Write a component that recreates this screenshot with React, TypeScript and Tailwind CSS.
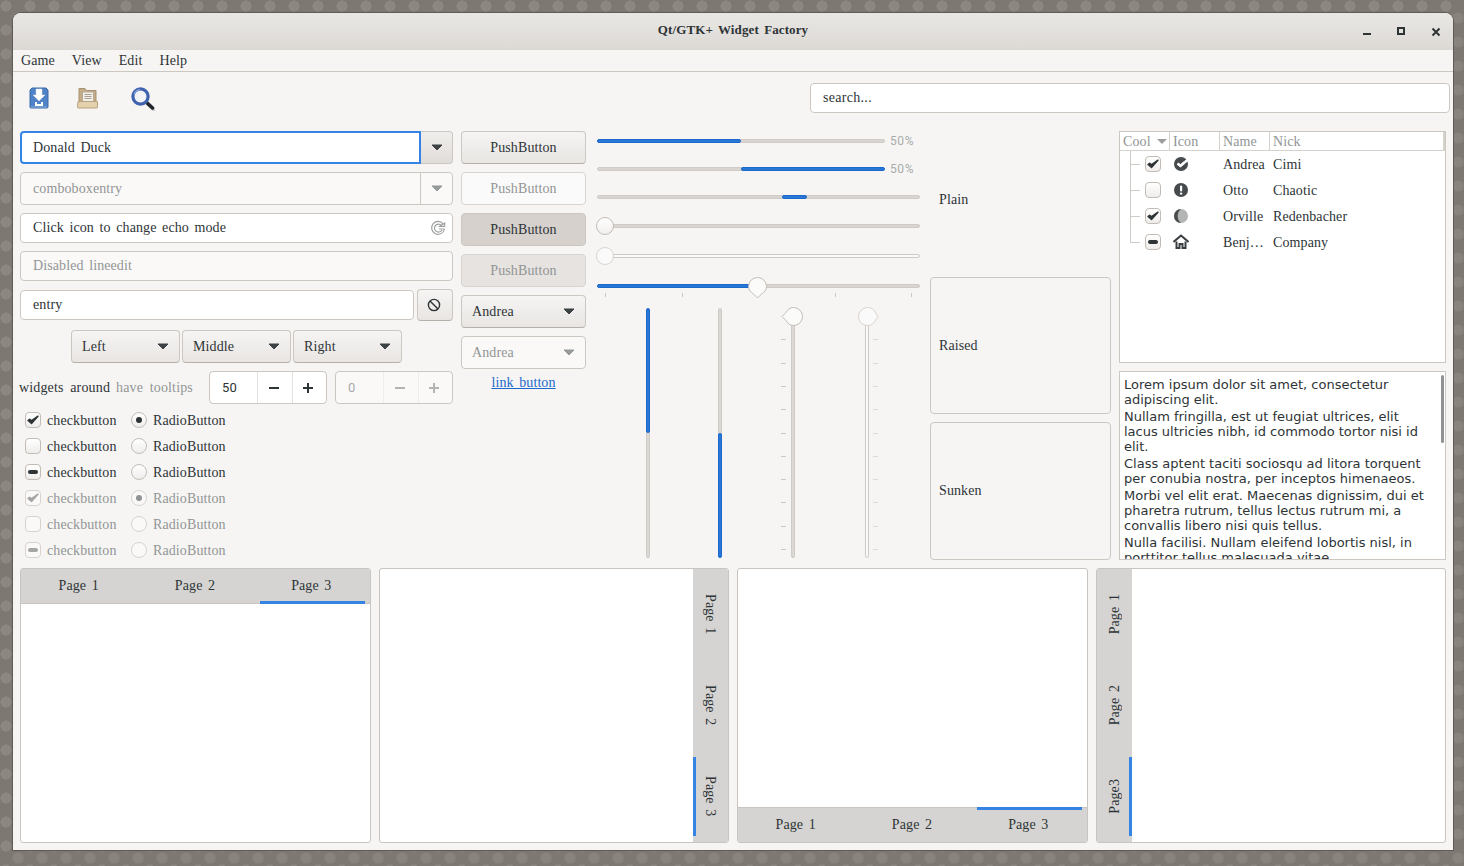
import React from "react";

const border = "border border-[#cdc7c2]";
const btn = "border border-[#cdc7c2] border-b-[#b6b0aa] rounded-[4px] bg-gradient-to-b from-[#f6f5f4] to-[#e8e5e2]";

function Caret({ dim }: { dim?: boolean }) {
  return (
    <svg width="12" height="7" viewBox="0 0 12 7" className="shrink-0">
      <path d="M1 1h10L6 6z" fill={dim ? "#979a9a" : "#3d4245"} stroke={dim ? "#979a9a" : "#3d4245"} strokeLinejoin="round" />
    </svg>
  );
}

function CheckBox({ state, dim }: { state: "on" | "off" | "mixed"; dim?: boolean }) {
  const c = dim ? "#a4a6a6" : "#2e3436";
  return (
    <span className={`w-[16px] h-[16px] shrink-0 rounded-[4px] flex items-center justify-center border border-[#c3bcb6] ${dim ? "bg-[#faf9f8] border-[#d8d3cf]" : "bg-gradient-to-b from-[#ffffff] to-[#efedeb]"}`}>
      {state === "on" && (
        <svg width="12" height="12" viewBox="0 0 12 12">
          <path d="M1 6.5l3.5 3L11 2.2 4.6 6.6 2.6 5.2z" fill={c} stroke={c} strokeWidth="1.4" strokeLinejoin="round" />
        </svg>
      )}
      {state === "mixed" && <span className="w-[10px] h-[4px] rounded-[2px]" style={{ background: c }} />}
    </span>
  );
}

function Radio({ on, dim }: { on?: boolean; dim?: boolean }) {
  return (
    <span className={`w-[16px] h-[16px] shrink-0 rounded-full flex items-center justify-center border ${dim ? "bg-[#faf9f8] border-[#d8d3cf]" : "bg-gradient-to-b from-[#ffffff] to-[#efedeb] border-[#c3bcb6]"}`}>
      {on && <span className={`w-[6px] h-[6px] rounded-full ${dim ? "bg-[#8f9292]" : "bg-[#2e3436]"}`} />}
    </span>
  );
}

function CheckRow({ check, radio, dim }: { check: "on" | "off" | "mixed"; radio?: boolean; dim?: boolean }) {
  return (
    <div className={`h-[26px] flex items-center pl-[5px] ${dim ? "text-[#929595]" : ""}`}>
      <CheckBox state={check} dim={dim} />
      <span className="ml-[6px] w-[84px]">checkbutton</span>
      <Radio on={radio} dim={dim} />
      <span className="ml-[6px]">RadioButton</span>
    </div>
  );
}

function Dropdown({ label }: { label: string }) {
  return (
    <div className={`${btn} w-[109px] h-[33px] flex items-center justify-between pl-[10px] pr-[10px]`}>
      <span>{label}</span>
      <Caret />
    </div>
  );
}

function Spin({ value, dim }: { value: string; dim?: boolean }) {
  const ink = dim ? "#b3b5b5" : "#2e3436";
  return (
    <div className={`w-[118px] h-[33px] flex rounded-[4px] border border-[#cdc7c2] ${dim ? "bg-[#faf9f8]" : "bg-white"}`}>
      <div className={`w-[47px] flex items-center pl-[12px] font-['Roboto',sans-serif] text-[13px] [word-spacing:0] ${dim ? "text-[#a8aaaa]" : ""}`}>{value}</div>
      {[0, 1].map((i) => (
        <div key={i} className={`flex-1 flex items-center justify-center pr-[2px] border-l ${dim ? "border-[#efedeb]" : "border-[#e4e1de]"}`}>
          <svg width="12" height="12" viewBox="0 0 12 12">
            <path d={i === 0 ? "M1 6h10" : "M1 6h10M6 1v10"} stroke={ink} strokeWidth="2" />
          </svg>
        </div>
      ))}
    </div>
  );
}

function Progress({ from, to, width, label }: { from: number; to: number; width: number; label?: boolean }) {
  return (
    <div className="h-[20px] flex items-center">
      <div className="relative h-[4px] rounded-[2px] bg-[#d9d5d1] border border-[#d0cbc6]" style={{ width }}>
        <div className="absolute -top-px -bottom-px rounded-[2px] bg-[#2a76d6] border border-[#1b6acb]" style={{ left: from - 1, width: to - from }} />
      </div>
      {label && <span className="ml-[5px] font-['Roboto',sans-serif] text-[12px] text-[#a9abab] tracking-[0.6px]">50%</span>}
    </div>
  );
}

function Thumb({ dim }: { dim?: boolean }) {
  return <span className={`absolute w-[18px] h-[18px] rounded-full border ${dim ? "bg-[#fafafa] border-[#d8d3cf]" : "bg-gradient-to-b from-[#ffffff] to-[#f1efed] border-[#c3bcb6]"}`} />;
}

function PointThumb({ d, dim, cls, w, h }: { d: string; dim?: boolean; cls: string; w: number; h: number }) {
  return (
    <svg width={w} height={h} viewBox={`0 0 ${w} ${h}`} className={`absolute ${cls}`}>
      <path d={d} fill={dim ? "#fafafa" : "#fbfbfa"} stroke={dim ? "#d8d3cf" : "#c3bcb6"} />
    </svg>
  );
}

function VBar({ fill, dim, ticks, thumb }: { fill?: "top" | "bottom"; dim?: boolean; ticks?: "l" | "r"; thumb?: "l" | "r" }) {
  const ys = [31, 55, 78, 101, 125, 148, 171, 194, 218, 241];
  return (
    <div className={`relative w-[4px] h-[250px] rounded-[2px] border border-[#cfcac5] ${dim ? "bg-[#fafafa]" : "bg-[#dcd8d4]"}`}>
      {fill === "top" && <div className="absolute -left-px -right-px -top-px h-[125px] rounded-[2px] bg-[#2a76d6] border border-[#1b6acb]" />}
      {fill === "bottom" && <div className="absolute -left-px -right-px -bottom-px h-[125px] rounded-[2px] bg-[#2a76d6] border border-[#1b6acb]" />}
      {ticks && ys.map((y) => (
        <span key={y} className={`absolute w-[5px] h-px ${ticks === "l" ? "left-[-11px] bg-[#cdc7c2]" : "left-[7px] bg-[#dedad6]"}`} style={{ top: y - 1 }} />
      ))}
      {thumb === "l" && <PointThumb w={22} h={20} cls="left-[-11px] top-[-2px]" d="M1 9.5L5 5.5C6.7 2.5 9 .5 12.5.5a9 9 0 0 1 0 18c-3.5 0-5.8-2-7.5-5z" />}
      {thumb === "r" && <PointThumb w={22} h={20} dim cls="left-[-9px] top-[-2px]" d="M21 9.5L19 6.5C17.3 2.5 14 .5 10.5.5a9 9 0 0 0 0 18c3.5 0 6.8-2 8.5-6z" />}
    </div>
  );
}

function HTabs({ bottom }: { bottom?: boolean }) {
  return (
    <div className={`w-[351px] h-[275px] flex bg-white border border-[#c9c4bf] rounded-[3px] overflow-hidden ${bottom ? "flex-col-reverse" : "flex-col"}`}>
      <div className={`h-[35px] shrink-0 flex bg-[#d5d4d2] border-[#c9c4bf] ${bottom ? "border-t" : "border-b"}`}>
        {["Page 1", "Page 2", "Page 3"].map((t, i) => (
          <div key={t} className="relative flex-1 flex items-center justify-center pb-[2px] pr-[1px]">
            {t}
            {i === 2 && <span className={`absolute left-[6px] right-[5px] h-[3px] bg-[#3584e4] ${bottom ? "top-[-1px]" : "bottom-[-1px]"}`} />}
          </div>
        ))}
      </div>
      <div className="flex-1" />
    </div>
  );
}

function VTabs({ left, labels }: { left?: boolean; labels: string[] }) {
  return (
    <div className={`w-[350px] h-[275px] flex bg-white border border-[#c9c4bf] rounded-[3px] overflow-hidden ${left ? "flex-row" : "flex-row-reverse"}`}>
      <div className="w-[35px] shrink-0 flex flex-col bg-[#d5d4d2]">
        {labels.map((t, i) => (
          <div key={i} className="relative flex-1 flex items-center justify-center">
            <span className={`[writing-mode:vertical-rl] ${left ? "rotate-180" : ""}`}>{t}</span>
            {i === 2 && <span className={`absolute top-[6px] bottom-[6px] w-[3px] bg-[#3584e4] ${left ? "right-0" : "left-0"}`} />}
          </div>
        ))}
      </div>
      <div className="flex-1" />
    </div>
  );
}

function SaveIcon() {
  return (
    <svg width="20" height="22" viewBox="0 0 20 22">
      <path d="M3 1h14l2 2v17a1 1 0 0 1-1 1H2a1 1 0 0 1-1-1V3z" fill="#4f82c6" stroke="#3a68a8" />
      <path d="M2 20h16" stroke="#8fb2df" />
      <path d="M7 2h6v6h3l-6 6-6-6h3z" fill="#fff" stroke="#d4deea" strokeWidth=".5" />
      <path d="M6 15v4h8v-4h-2v2H8v-2z" fill="#fff" />
    </svg>
  );
}
function FolderIcon() {
  return (
    <svg width="21" height="22" viewBox="0 0 21 22">
      <path d="M2 4V1.5h6l1.5 2H19v15H2z" fill="#c4ac88" stroke="#a8916e" />
      <rect x="5.5" y="5" width="11" height="9.5" fill="#f2efe9" stroke="#b7ab97" />
      <path d="M7.5 7.5h7M7.5 9.5h7M7.5 11.5h7" stroke="#a9a294" />
      <path d="M1 14.5h19.5V20a1 1 0 0 1-1 1H1.5a1 1 0 0 1-1-1z" fill="#e3d0ad" stroke="#b8a27d" />
    </svg>
  );
}
function SearchIcon() {
  return (
    <svg width="24" height="24" viewBox="0 0 24 24">
      <path d="M15 15l7.5 7" stroke="#999" strokeWidth="4" strokeLinecap="round" opacity=".5" />
      <path d="M14.5 14.5l7 6.5" stroke="#20242a" strokeWidth="3.4" strokeLinecap="round" />
      <circle cx="9.5" cy="9.5" r="7.6" fill="#f2f4f7" stroke="#3f63ae" strokeWidth="3.2" />
      <path d="M3 7.5A7 7 0 0 1 9 2.6" fill="none" stroke="#8ba8dc" strokeWidth="1.2" />
    </svg>
  );
}

function TreeIcon({ kind }: { kind: number }) {
  if (kind === 0)
    return (
      <svg width="16" height="16" viewBox="0 0 16 16">
        <circle cx="8" cy="8" r="7" fill="#474a4c" />
        <path d="M4.5 7.5l3 2.5L15 3.5" fill="none" stroke="#fff" strokeWidth="2.4" />
        <path d="M4.8 7.6l2.7 2.2 3.8-3.6" fill="none" stroke="#fff" strokeWidth="2" />
      </svg>
    );
  if (kind === 1)
    return (
      <svg width="16" height="16" viewBox="0 0 16 16">
        <circle cx="8" cy="8" r="7" fill="#474a4c" />
        <rect x="7" y="3.5" width="2.2" height="6" rx="1" fill="#fff" />
        <circle cx="8.1" cy="11.6" r="1.2" fill="#fff" />
      </svg>
    );
  if (kind === 2)
    return (
      <svg width="16" height="16" viewBox="0 0 16 16">
        <circle cx="8" cy="8" r="7" fill="#b3b4b4" />
        <path d="M8 1a7 7 0 0 0-7 7 7 7 0 0 0 7 7 9 9 0 0 1 0-14z" fill="#474a4c" />
      </svg>
    );
  return (
    <svg width="16" height="16" viewBox="0 0 16 16">
      <path d="M.5 8L8 1.5 15.5 8" fill="none" stroke="#3a3e40" strokeWidth="2" />
      <path d="M3.5 7.5V14h3v-4h3v4h3V7.5" fill="none" stroke="#3a3e40" strokeWidth="2" />
    </svg>
  );
}

const tree: [("on" | "off" | "mixed"), string, string][] = [
  ["on", "Andrea", "Cimi"],
  ["off", "Otto", "Chaotic"],
  ["on", "Orville", "Redenbacher"],
  ["mixed", "Benj…", "Company"],
];

export default function App() {
  return (
    <div className="w-[1464px] h-[866px] overflow-hidden pt-[13px] pl-[13px] bg-[#7e7872] bg-[radial-gradient(circle_at_25%_25%,#8c8781_0_5px,transparent_6px),radial-gradient(circle_at_75%_75%,#88837d_0_5px,transparent_6px)] bg-[length:24px_24px] font-['Liberation_Serif',serif] text-[14px] text-[#2e3436] [word-spacing:2px] tracking-[0.1px]">
      <div className="w-[1440px] h-[837px] flex flex-col bg-[#f6f5f4] rounded-t-[8px] overflow-hidden shadow-[0_0_0_1px_#5f5a55]">
        <div className="relative h-[37px] shrink-0 flex items-center justify-center pb-[4px] bg-gradient-to-b from-[#e9e7e4] to-[#dcd9d5] font-bold text-[13px]">
          Qt/GTK+ Widget Factory
          <span className="absolute left-[1350px] top-[20px] w-[8px] h-[2px] bg-[#2e3436]" />
          <span className="absolute left-[1384px] top-[14px] w-[8px] h-[8px] border-2 border-[#2e3436]" />
          <svg width="10" height="10" viewBox="0 0 10 10" className="absolute left-[1418px] top-[14px]">
            <path d="M1.5 1.5l7 7M8.5 1.5l-7 7" stroke="#2e3436" strokeWidth="2" />
          </svg>
        </div>
        <div className="h-[22px] shrink-0 flex items-center gap-[17px] pl-[8px] border-b border-[#cdc7c2]">
          <span>Game</span><span>View</span><span>Edit</span><span>Help</span>
        </div>
        <div className="h-[59px] shrink-0 flex items-start pl-[16px] pr-[3px] pt-[11px]">
          <div className="flex items-start mt-[4px]">
            <SaveIcon />
            <span className="ml-[28px]"><FolderIcon /></span>
            <span className="ml-[33px]"><SearchIcon /></span>
          </div>
          <div className={`ml-auto w-[640px] h-[30px] flex items-center pl-[12px] pb-[2px] bg-white rounded-[4px] tracking-[0.3px] ${border}`}>search...</div>
        </div>

        <div className="flex pl-[7px] h-[429px] shrink-0">
          {/* Left column */}
          <div className="w-[433px] shrink-0 flex flex-col [&>*]:shrink-0">
            <div className="h-[33px] flex">
              <div className="flex-1 flex items-center pl-[11px] bg-white rounded-l-[4px] border-2 border-[#3584e4]">Donald Duck</div>
              <div className="w-[32px] flex items-center justify-center rounded-r-[4px] border border-l-0 border-[#cdc7c2] bg-gradient-to-b from-[#f0eeec] to-[#e0dcd9]"><Caret /></div>
            </div>
            <div className={`mt-[8px] h-[33px] flex rounded-[4px] bg-[#faf9f8] text-[#929595] ${border}`}>
              <div className="flex-1 flex items-center pl-[12px]">comboboxentry</div>
              <div className="w-[32px] flex items-center justify-center border-l border-[#cdc7c2]"><Caret dim /></div>
            </div>
            <div className={`mt-[8px] h-[30px] flex items-center justify-between pl-[12px] pr-[6px] rounded-[4px] bg-white ${border}`}>
              <span className="pb-[2px]">Click icon to change echo mode</span>
              <svg width="16" height="16" viewBox="0 0 16 16" fill="none" stroke="#9a9c9c" strokeWidth="1.1">
                <path d="M13.5 4.2A6.5 6.5 0 1 0 14.5 9" />
                <path d="M12 6.2A4 4 0 1 0 12 10" />
                <path d="M9.5 6.5h5.2V3z" fill="#f3f3f3" />
                <path d="M14.5 9H9" />
              </svg>
            </div>
            <div className={`mt-[8px] h-[30px] flex items-center pl-[12px] pb-[2px] rounded-[4px] bg-[#faf9f8] text-[#929595] ${border}`}>Disabled lineedit</div>
            <div className="mt-[8px] h-[32px] flex items-center">
              <div className={`w-[394px] h-[30px] flex items-center pl-[12px] pb-[2px] rounded-[4px] bg-white ${border}`}>entry</div>
              <div className={`ml-[3px] w-[36px] h-[32px] flex items-center justify-center pr-[2px] ${btn}`}>
                <svg width="14" height="14" viewBox="0 0 14 14" fill="none" stroke="#2e3436" strokeWidth="1.4">
                  <circle cx="7" cy="7" r="5.6" />
                  <path d="M3 3l8 8" />
                </svg>
              </div>
            </div>
            <div className="mt-[9px] h-[33px] flex gap-[2px] pl-[51px]">
              <Dropdown label="Left" />
              <Dropdown label="Middle" />
              <Dropdown label="Right" />
            </div>
            <div className="mt-[8px] h-[33px] flex items-center [word-spacing:3px] tracking-[0.15px]">
              <span className="-ml-px">widgets around</span>
              <span className="ml-[6px] text-[#929595]">have tooltips</span>
              <span className="ml-auto"><Spin value="50" /></span>
              <span className="ml-[8px]"><Spin value="0" dim /></span>
            </div>
            <div className="mt-[3px] flex flex-col [&>*]:shrink-0">
              <CheckRow check="on" radio />
              <CheckRow check="off" />
              <CheckRow check="mixed" />
              <CheckRow check="on" radio dim />
              <CheckRow check="off" dim />
              <CheckRow check="mixed" dim />
            </div>
          </div>

          {/* Buttons */}
          <div className="ml-[8px] w-[125px] shrink-0 flex flex-col gap-[8px]">
            <div className={`h-[33px] flex items-center justify-center ${btn}`}>PushButton</div>
            <div className={`h-[33px] flex items-center justify-center rounded-[4px] bg-[#fbfafa] text-[#929595] ${border} border-[#d8d3cf]`}>PushButton</div>
            <div className={`h-[33px] flex items-center justify-center rounded-[4px] bg-[#d6d1cd] ${border}`}>PushButton</div>
            <div className="h-[33px] flex items-center justify-center rounded-[4px] bg-[#e6e3e0] text-[#929595] border border-[#d8d3cf]">PushButton</div>
            <div className={`h-[33px] flex items-center justify-between pl-[10px] pr-[10px] ${btn}`}>
              <span>Andrea</span><Caret />
            </div>
            <div className={`h-[33px] flex items-center justify-between pl-[10px] pr-[10px] rounded-[4px] bg-[#faf9f8] text-[#929595] ${border}`}>
              <span>Andrea</span><Caret dim />
            </div>
            <div className="mt-[-5px] text-center text-[#1b6acb] underline">link button</div>
          </div>

          {/* Sliders */}
          <div className="ml-[11px] w-[323px] shrink-0 flex flex-col">
            <Progress from={0} to={144} width={288} label />
            <div className="mt-[8px]"><Progress from={144} to={288} width={288} label /></div>
            <div className="mt-[8px]"><Progress from={185} to={210} width={323} /></div>
            <div className="mt-[10px] h-[18px] relative flex items-center">
              <div className="w-full h-[4px] rounded-[2px] bg-[#d9d5d1] border border-[#d0cbc6]" />
              <span className="absolute left-[-1px] top-0 w-[18px] h-[18px]"><Thumb /></span>
            </div>
            <div className="mt-[12px] h-[18px] relative flex items-center">
              <div className="w-full h-[4px] rounded-[2px] bg-[#fafafa] border border-[#cfcac5]" />
              <span className="absolute left-[-1px] top-0 w-[18px] h-[18px]"><Thumb dim /></span>
            </div>
            <div className="mt-[12px] h-[18px] relative flex items-center">
              <div className="w-full h-[4px] rounded-[2px] bg-[#d9d5d1] border border-[#d0cbc6]" />
              <div className="absolute left-0 w-[161px] h-[4px] rounded-[2px] bg-[#2a76d6] border border-[#1b6acb]" />
              {[8, 85, 238, 314].map((x) => (
                <span key={x} className="absolute top-[16px] w-px h-[4px] bg-[#cdc7c2]" style={{ left: x }} />
              ))}
              <PointThumb w={20} h={22} cls="left-[151px] top-0" d="M.5 9.5a9 9 0 0 1 18 0c0 3.5-2 5.5-5 7.5L9.5 21l-4-4c-3-2-5-4-5-7.5z" />
            </div>
            <div className="mt-[13px] flex pl-[49px]">
              <VBar fill="top" />
              <span className="ml-[68px]"><VBar fill="bottom" /></span>
              <span className="ml-[69px]"><VBar ticks="l" thumb="l" /></span>
              <span className="ml-[70px]"><VBar dim ticks="r" thumb="r" /></span>
            </div>
          </div>

          {/* Frames */}
          <div className="ml-[10px] w-[181px] shrink-0 flex flex-col gap-[8px]">
            <div className="h-[138px] flex items-center pl-[9px] pb-[2px]">Plain</div>
            <div className={`h-[137px] flex items-center pl-[8px] rounded-[4px] ${border}`}>Raised</div>
            <div className={`h-[138px] flex items-center pl-[8px] pb-[2px] rounded-[4px] ${border}`}>Sunken</div>
          </div>

          {/* Right */}
          <div className="ml-[8px] w-[327px] shrink-0 flex flex-col gap-[8px]">
            <div className={`relative h-[232px] shrink-0 bg-white ${border}`}>
              <div className="h-[19px] flex text-[#929595] border-b border-r-2 border-[#d5d1cd]">
                <div className="w-[50px] flex items-center justify-between pl-[3px] pr-[2px] border-r border-[#d5d1cd]">
                  <span>Cool</span>
                  <svg width="10" height="5" viewBox="0 0 10 5"><path d="M0 0h10L5 5z" fill="#9b9d9d" /></svg>
                </div>
                <div className="w-[50px] flex items-center pl-[3px] border-r border-[#d5d1cd]">Icon</div>
                <div className="w-[50px] flex items-center pl-[3px] border-r border-[#d5d1cd]">Name</div>
                <div className="flex-1 flex items-center pl-[3px]">Nick</div>
              </div>
              <span className="absolute left-[10px] top-[19px] w-px h-[91px] bg-[#cfcbc7]" />
              {tree.map(([s, n, k], i) => (
                <div key={n} className="relative h-[26px] flex items-center">
                  <span className="absolute left-[10px] top-[13px] w-[10px] h-px bg-[#cfcbc7]" />
                  <span className="ml-[25px]"><CheckBox state={s} /></span>
                  <span className="ml-[12px] w-[16px]"><TreeIcon kind={i} /></span>
                  <span className="ml-[34px] w-[50px] whitespace-nowrap">{n}</span>
                  <span>{k}</span>
                </div>
              ))}
            </div>
            <div className={`relative flex-1 overflow-hidden bg-white pl-[4px] pr-[14px] pt-[5px] font-['DejaVu_Sans',sans-serif] text-[13px] leading-[15.2px] [word-spacing:0] tracking-normal ${border}`}>
              <span className="absolute right-[1px] top-[3px] w-[3px] h-[68px] rounded-[2px] bg-[#8f9396]" />
              <p className="mb-[1.5px]">Lorem ipsum dolor sit amet, consectetur adipiscing elit.</p>
              <p className="mb-[1.5px]">Nullam fringilla, est ut feugiat ultrices, elit lacus ultricies nibh, id commodo tortor nisi id elit.</p>
              <p className="mb-[1.5px]">Class aptent taciti sociosqu ad litora torquent per conubia nostra, per inceptos himenaeos.</p>
              <p className="mb-[1.5px]">Morbi vel elit erat. Maecenas dignissim, dui et pharetra rutrum, tellus lectus rutrum mi, a convallis libero nisi quis tellus.</p>
              <p>Nulla facilisi. Nullam eleifend lobortis nisl, in porttitor tellus malesuada vitae.</p>
            </div>
          </div>
        </div>

        <div className="mt-[8px] flex gap-[8px] pl-[7px]">
          <HTabs />
          <VTabs labels={["Page 1", "Page 2", "Page 3"]} />
          <HTabs bottom />
          <VTabs left labels={["Page 1", "Page 2", "Page3"]} />
        </div>
      </div>
    </div>
  );
}
